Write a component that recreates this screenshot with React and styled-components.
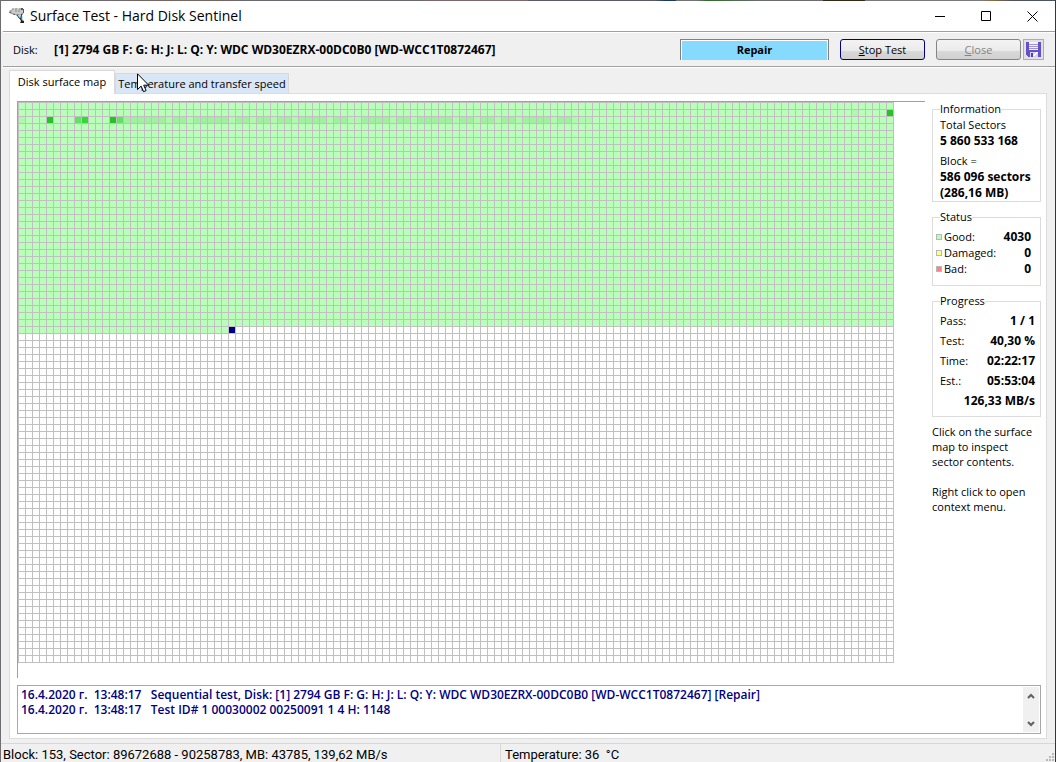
import React, { useState } from 'react';
import styled, { createGlobalStyle } from 'styled-components';

const Global = createGlobalStyle`
  *, *::before, *::after { box-sizing: border-box; }
  body {
    margin: 0;
    background: #f0f0f0;
    color: #000;
    font: 11px/16px "Open Sans", "Noto Sans", sans-serif;
  }
  button, textarea { font: inherit; color: inherit; margin: 0; padding: 0; }
`;

const Window = styled.div`
  min-height: 100vh;
  display: flex;
  flex-direction: column;
  border-left: 1px solid #6e6e72;
  border-right: 1px solid #34373e;
`;

const Backdrop = styled.div`
  height: 1px;
  background: linear-gradient(90deg, #6d696c 0 12%, #756560 12% 22%, #6a6870 22% 40%, #7b6668 40% 50%, #5c5a66 50% 62%, #1c3a64 63% 64%, #747474 64% 66%, #2f6b2c 67%, #6c6c70 72% 78%, #322a16 78% 82%, #7a7a7e 82% 93%, #86703a 94%, #4c525e 96%);
`;

const TitleBar = styled.header`
  display: flex;
  align-items: center;
  height: 30px;
  padding: 0 0 0 8px;
  gap: 5px;
  background: #fff;
`;

const Title = styled.h1`
  flex: 1;
  margin: 0;
  font-size: 14px;
  line-height: 20px;
  font-weight: 400;
`;

const WindowButtons = styled.div`
  display: flex;
`;

const WindowButton = styled.button`
  display: flex;
  align-items: center;
  justify-content: center;
  width: 46px;
  height: 30px;
  border: 0;
  background: none;
`;

const Divider = styled.div`
  height: 2px;
  margin: 0 0 0 2px;
  background: #a0a0a0;
  border-bottom: 1px solid #fff;
`;

const Toolbar = styled.div`
  display: flex;
  align-items: center;
  height: 33px;
  padding: 0 11px 0 12px;
`;

const DiskLabel = styled.span`
  width: 41px;
`;

const DiskName = styled.strong`
  flex: 1;
  font-size: 12px;
  white-space: nowrap;
`;

const Mode = styled.div`
  width: 149px;
  height: 21px;
  margin-right: 11px;
  border: 1px solid #808080;
  border-bottom: 0;
  background: #86daff;
  box-shadow: inset 1px 1px #fff, inset -1px 0 #fff;
  font-weight: 700;
  line-height: 20px;
  text-align: center;
`;

const PushButton = styled.button`
  width: 85px;
  height: 21px;
  margin-right: ${(p) => (p.$primary ? 11 : 2)}px;
  border: 1px solid ${(p) => (p.$primary ? '#000080' : '#858585')};
  border-radius: 3px;
  background: linear-gradient(#f3f3f3, #ebebeb 55%, #d9d9d9 60%, #d0d0d0);
  color: ${(p) => (p.$primary ? '#000' : '#838383')};
  line-height: 18px;
`;

const SaveButton = styled.button`
  display: flex;
  align-items: center;
  justify-content: center;
  width: 21px;
  height: 21px;
  border: 1px solid #adadad;
  background: #e1e1e1;
`;

const TabList = styled.div`
  position: relative;
  display: flex;
  align-items: flex-end;
  height: 25px;
  padding: 0 8px;
`;

const Tab = styled.button`
  height: ${(p) => (p.$active ? 24 : 20)}px;
  width: ${(p) => (p.$wide ? 174 : 106)}px;
  margin-bottom: ${(p) => (p.$active ? -1 : 0)}px;
  z-index: ${(p) => (p.$active ? 1 : 0)};
  border: 1px solid #d9d9d9;
  border-bottom: 0;
  background: ${(p) => (p.$active ? '#fff' : '#d8e6f5')};
  padding-bottom: ${(p) => (p.$active ? 2 : 0)}px;
  line-height: 18px;
  white-space: nowrap;
`;

const Pointer = styled.svg`
  position: absolute;
  left: 136px;
  top: 5px;
  z-index: 2;
  pointer-events: none;
`;

const Panel = styled.main`
  flex: 1;
  display: flex;
  flex-direction: column;
  gap: 7px;
  margin: 0 8px 4px;
  padding: 7px 5px 4px 7px;
  border: 1px solid #dcdcdc;
  background: #fff;
`;

const Upper = styled.div`
  flex: 1;
  display: flex;
  gap: 7px;
`;

const MapFrame = styled.div`
  flex: 1;
  min-width: 0;
  overflow: hidden;
  border-top: 1px solid #a0a0a0;
  border-left: 1px solid #a0a0a0;

  svg { display: block; }
`;

const Side = styled.aside`
  display: flex;
  flex-direction: column;
  gap: 7px;
  width: 109px;
`;

const Group = styled.fieldset`
  min-width: 0;
  margin: 0;
  padding: ${(p) => p.$pad};
  border: 1px solid #dcdcdc;
`;

const Legend = styled.legend`
  height: 16px;
  margin-left: ${(p) => p.$indent || 0}px;
  padding: 0;
`;

const Fact = styled.div`
  white-space: nowrap;

  & + & { margin-top: 4px; }
`;

const Value = styled.strong`
  font-size: 12px;
  font-weight: 700;
`;

const FactValue = styled(Value)`
  display: block;
`;

const Row = styled.div`
  display: flex;
  align-items: center;
  height: ${(p) => p.$height}px;
`;

const RowLabel = styled.span`
  flex: 1;
`;

const Swatch = styled.i`
  width: 6px;
  height: 6px;
  margin-right: 2px;
  border: 1px solid #b8b8b8;
  background: ${(p) => p.$color};
`;

const Hint = styled.p`
  margin: 0 0 15px;
  line-height: 15px;
`;

const Log = styled.div`
  display: flex;
  height: 49px;
  padding: 1px;
  border: 1px solid #a8a8a8;
`;

const LogText = styled.textarea`
  flex: 1;
  min-width: 0;
  padding: 0 2px;
  border: 0;
  outline: 0;
  resize: none;
  overflow: hidden;
  background: #fff;
  color: #000080;
  font-size: 12px;
  font-weight: 600;
  line-height: 15px;
  white-space: pre;
`;

const ScrollBar = styled.div`
  display: flex;
  flex-direction: column;
  justify-content: space-between;
  width: 16px;
  background: #f0f0f0;
`;

const ScrollButton = styled.button`
  display: flex;
  align-items: center;
  justify-content: center;
  height: 17px;
  border: 0;
  background: none;
`;

const StatusBar = styled.footer`
  display: flex;
  height: 19px;
  border-top: 1px solid #d7d7d7;
  font: 13px/22px Roboto, sans-serif;
  white-space: pre;
`;

const StatusCell = styled.span`
  flex: ${(p) => p.$grow};
  height: 18px;
  padding-left: ${(p) => p.$inset}px;
  border-right: ${(p) => (p.$divided ? '1px solid #d7d7d7' : '0')};
`;

const Grip = styled.svg`
  align-self: flex-end;
  margin: 0 1px 1px 0;
`;

const CELL = 7;
const COLUMNS = 125;
const ROWS = 80;
const TESTED = 4030;
const SHADES = { fast: '#b0f7b0', slow: '#9ff09f', slower: '#64e064', late: '#32d932', latest: '#24c424' };

const slowRuns = [[15, 20], [22, 23], [25, 29], [31, 32], [34, 35], [37, 38], [40, 43], [45, 46], [49, 52], [54, 55], [57, 61], [63, 64], [66, 67], [69, 70], [72, 75], [77, 78]];
const isSlow = (column) => slowRuns.some(([from, to]) => column >= from && column <= to);

const blocks = [
  { column: 124, row: 1, color: SHADES.latest },
  { column: 119, row: 1, color: SHADES.fast },
  { column: 0, row: 2, color: SHADES.fast },
  { column: 4, row: 2, color: SHADES.latest },
  { column: 8, row: 2, color: SHADES.slower },
  { column: 9, row: 2, color: SHADES.late },
  { column: 13, row: 2, color: SHADES.latest },
  { column: 14, row: 2, color: SHADES.slower },
  ...Array.from({ length: 67 }, (_, i) => ({ column: i + 15, row: 2, color: isSlow(i + 15) ? SHADES.slow : SHADES.fast })),
  { column: 30, row: 32, color: '#000080' },
];

function SurfaceMap() {
  const fullRows = Math.floor(TESTED / COLUMNS);
  const width = COLUMNS * CELL + 1;
  const height = ROWS * CELL + 1;
  const lines = [
    ...Array.from({ length: COLUMNS + 1 }, (_, i) => `M${i * CELL} 0h1v${height}h-1z`),
    ...Array.from({ length: ROWS + 1 }, (_, i) => `M0 ${i * CELL}h${width}v1h-${width}z`),
  ].join('');
  return (
    <svg width={width} height={height} shapeRendering="crispEdges" role="img" aria-label="Disk surface map">
      <rect width={width} height={fullRows * CELL} fill="#b9ffb9" />
      <rect y={fullRows * CELL} width={(TESTED % COLUMNS) * CELL} height={CELL} fill="#b9ffb9" />
      {blocks.map((b) => (
        <rect key={`${b.row}-${b.column}`} x={b.column * CELL} y={b.row * CELL} width={CELL} height={CELL} fill={b.color} />
      ))}
      <path d={lines} fill="#c0c0c0" />
    </svg>
  );
}

const LogoIcon = () => (
  <svg width="16" height="16" viewBox="0 0 16 16" aria-hidden="true">
    <path d="M0 3 3 1l5-1 6 1 1 2-1 3-6 1-5-1z" fill="#c9cbcb" />
    <path d="M1 3h3M3 1h5m2 0h4M6 3h5" stroke="#858585" strokeDasharray="2 1" />
    <path d="M0 4l4 2 4 1 4 0 3-2" fill="none" stroke="#4a4a4a" strokeWidth="1" strokeDasharray="3 1" />
    <path d="M12 0h2v1h1v4h-1V2h-2z" fill="#555" />
    <path d="M9 7h4l1 3-3 1-2-2z" fill="#9bd8ec" />
    <path d="M8 7l2 3 3 2" fill="none" stroke="#30404a" />
    <path d="M13 5v7l2 1v2h-4l1-2-1-2z" fill="#222" />
    <path d="M12 8l1 4" stroke="#1a9fd0" />
  </svg>
);

const SaveIcon = () => (
  <svg width="15" height="15" viewBox="0 0 15 15" shapeRendering="crispEdges" aria-hidden="true">
    <path d="M0 0h15v15H2l-2-2z" fill="#6550c8" />
    <path d="M3 0h9v8H3z" fill="#f4f2ff" />
    <path d="M3 2h9v1H3zM3 4h9v1H3zM3 6h9v1H3z" fill="#9c92d8" />
    <path d="M4 10h8v5H4z" fill="#d6d2ee" />
    <path d="M5 11h2v4H5z" fill="#5340b4" />
    <path d="M7 14l3-4h2l-4 5z" fill="#fff" />
  </svg>
);

const stats = [
  ['Good:', '4030', '#b9ffb9'],
  ['Damaged:', '0', '#ffff80'],
  ['Bad:', '0', '#ff8080'],
];
const progress = [
  ['Pass:', '1 / 1'],
  ['Test:', '40,30 %'],
  ['Time:', '02:22:17'],
  ['Est.:', '05:53:04'],
  ['', '126,33 MB/s'],
];
const log = `16.4.2020 г.  13:48:17   Sequential test, Disk: [1] 2794 GB F: G: H: J: L: Q: Y: WDC WD30EZRX-00DC0B0 [WD-WCC1T0872467] [Repair]
16.4.2020 г.  13:48:17   Test ID# 1 00030002 00250091 1 4 H: 1148`;

export default function App() {
  const [tab, setTab] = useState(0);
  return (
    <Window>
      <Global />
      <Backdrop />
      <TitleBar>
        <LogoIcon />
        <Title>Surface Test - Hard Disk Sentinel</Title>
        <WindowButtons>
          <WindowButton aria-label="Minimize">
            <svg width="11" height="11"><path d="M0 5.5h10" stroke="#000" /></svg>
          </WindowButton>
          <WindowButton aria-label="Maximize">
            <svg width="11" height="11"><path d="M.5.5h9v9h-9z" fill="none" stroke="#000" /></svg>
          </WindowButton>
          <WindowButton aria-label="Close window">
            <svg width="11" height="11"><path d="M.5.5l10 10m0-10l-10 10" stroke="#000" /></svg>
          </WindowButton>
        </WindowButtons>
      </TitleBar>
      <Divider />
      <Toolbar>
        <DiskLabel>Disk:</DiskLabel>
        <DiskName>[1] 2794 GB F: G: H: J: L: Q: Y: WDC WD30EZRX-00DC0B0 [WD-WCC1T0872467]</DiskName>
        <Mode>Repair</Mode>
        <PushButton $primary><u>S</u>top Test</PushButton>
        <PushButton disabled><u>C</u>lose</PushButton>
        <SaveButton aria-label="Save"><SaveIcon /></SaveButton>
      </Toolbar>
      <Divider />
      <TabList role="tablist">
        <Tab role="tab" aria-selected={tab === 0} $active={tab === 0} onClick={() => setTab(0)}>Disk surface map</Tab>
        <Tab role="tab" aria-selected={tab === 1} $wide $active={tab === 1} onClick={() => setTab(1)}>Temperature and transfer speed</Tab>
        <Pointer width="13" height="20" viewBox="0 0 13 20" aria-hidden="true">
          <path d="M.5.8v15.7l3.6-3.4 2.5 5.6 2.5-1.1-2.4-5.4h5z" fill="#fff" stroke="#000" />
        </Pointer>
      </TabList>
      <Panel>
        <Upper>
          <MapFrame><SurfaceMap /></MapFrame>
          <Side>
            <Group $pad="0 0 0 7px">
              <Legend>Information</Legend>
              <Fact>Total Sectors<FactValue>5 860 533 168</FactValue></Fact>
              <Fact>Block =<FactValue>586 096 sectors</FactValue><FactValue>(286,16 MB)</FactValue></Fact>
            </Group>
            <Group $pad="4px 9px 8px 3px">
              <Legend $indent={4}>Status</Legend>
              {stats.map(([label, value, color]) => (
                <Row key={label} $height={16}><Swatch $color={color} /><RowLabel>{label}</RowLabel><Value>{value}</Value></Row>
              ))}
            </Group>
            <Group $pad="2px 5px 5px 7px">
              <Legend>Progress</Legend>
              {progress.map(([label, value]) => (
                <Row key={value} $height={20}><RowLabel>{label}</RowLabel><Value>{value}</Value></Row>
              ))}
            </Group>
            <div>
              <Hint>Click on the surface map to inspect sector contents.</Hint>
              <Hint>Right click to open context menu.</Hint>
            </div>
          </Side>
        </Upper>
        <Log>
          <LogText readOnly aria-label="Test log" value={log} />
          <ScrollBar>
            <ScrollButton aria-label="Scroll up"><svg width="8" height="6"><path d="M1 5l3-3 3 3" fill="none" stroke="#606060" strokeWidth="2" /></svg></ScrollButton>
            <ScrollButton aria-label="Scroll down"><svg width="8" height="6"><path d="M1 1l3 3 3-3" fill="none" stroke="#606060" strokeWidth="2" /></svg></ScrollButton>
          </ScrollBar>
        </Log>
      </Panel>
      <StatusBar>
        <StatusCell $grow="0 0 500px" $inset={2} $divided>Block: 153, Sector: 89672688 - 90258783, MB: 43785, 139,62 MB/s</StatusCell>
        <StatusCell $grow="1" $inset={4}>Temperature: 36  °C</StatusCell>
        <Grip width="8" height="8" shapeRendering="crispEdges" aria-hidden="true">
          <path d="M6 0h2v2H6zM3 3h2v2H3zM6 3h2v2H6zM0 6h2v2H0zM3 6h2v2H3zM6 6h2v2H6z" fill="#b8b8b8" />
        </Grip>
      </StatusBar>
    </Window>
  );
}
